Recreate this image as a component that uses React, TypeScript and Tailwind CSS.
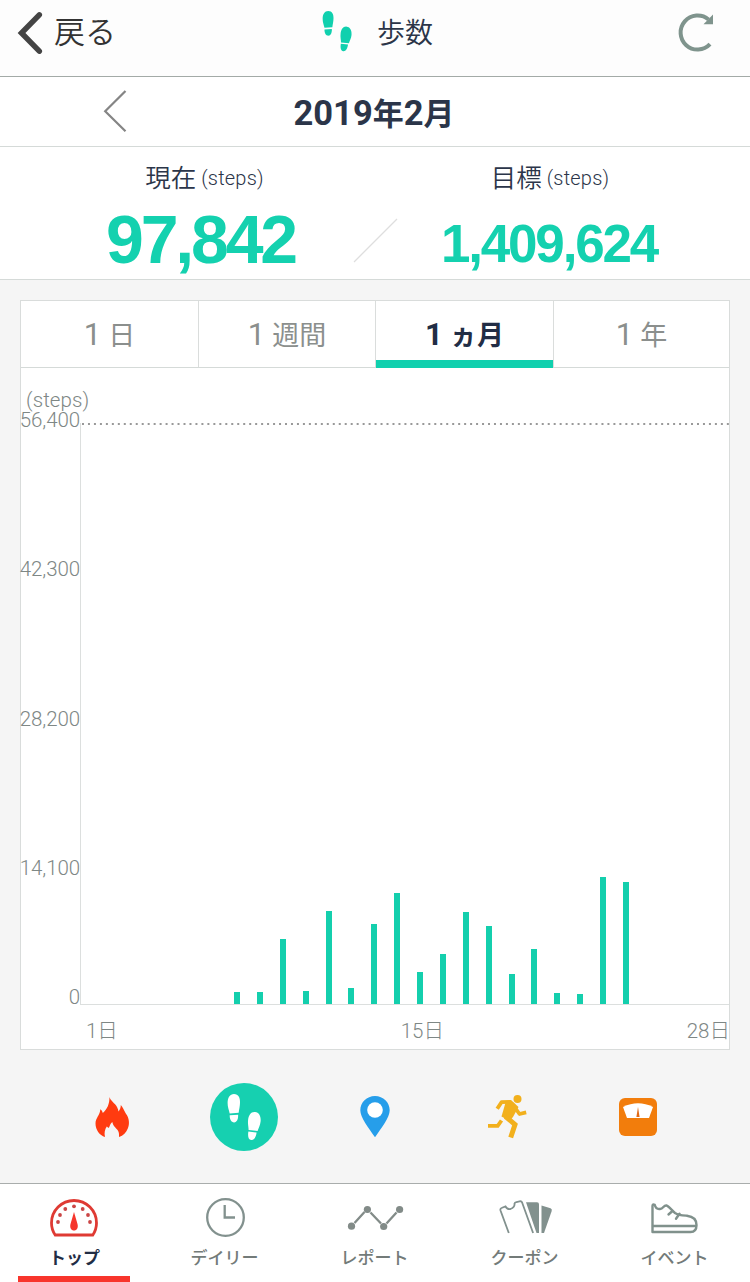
import type { ReactNode } from "react";
import clsx from "clsx";

const TABS = [
  { unit: "日", active: false },
  { unit: "週間", active: false },
  { unit: "ヵ月", active: true },
  { unit: "年", active: false },
];

// Bar heights in px for day 8 through day 25
const BARS = [12, 12, 65, 13, 93, 16, 80, 111, 32, 50, 92, 78, 30, 55, 11, 10, 127, 122];

function Footprints({ className }: { className?: string }) {
  return (
    <svg viewBox="227 1093 34 48" className={className} fill="currentColor">
      <path d="M234 1094c4.500 0 6.200 4 6 8.500 0 4-1 7-1.300 10.300l-9 .6c-.7-3.400-2.200-6.400-2.100-10.700.1-5 2.200-8.700 6.400-8.700Z" />
      <path d="m229.700 1115.300 8.400-.6c.3 4.200-1.300 7.700-4 7.700-2.900 0-4.500-3-4.400-7.100Z" />
      <path d="M255.100 1112c4.200.5 6 4.500 5.500 9.500-.4 4-2.200 6.700-3 9.500l-9-1c0-3.400-1-6.300-.5-10 .6-5 2.900-8.500 7-8Z" />
      <path d="m248.400 1131.600 8.200.9c-.5 4.300-2.400 7.900-5.400 7.600-2.900-.3-3.600-4.200-2.800-8.500Z" />
    </svg>
  );
}

function Header() {
  return (
    <header className="flex h-[77px] items-start border-b border-[#a3aaa7] bg-[#fdfdfd]">
      <button className="flex w-[250px] items-center pl-4 text-left">
        <svg viewBox="16 8 28 48" className="mt-2 h-12 w-7" fill="none" stroke="#444" strokeWidth="5.500" strokeLinecap="round">
          <path d="M39.300 13.800 21.500 32l17.800 18.200" />
        </svg>
        <span className="mt-[9px] ml-[10px] text-[31px] leading-[48px] font-[350] text-[#333]">戻る</span>
      </button>
      <div className="flex w-[250px] pl-[72px] text-[#10d0ae]">
        <Footprints className="mt-[10px] h-[42px] w-[30px]" />
        <span className="mt-[10px] ml-[25px] text-[28px] leading-[48px] font-[350] text-[#2b3548]">歩数</span>
      </div>
      <button className="ml-[176px]" aria-label="更新">
        <svg viewBox="676 10 42 44" className="mt-[10px] h-11 w-[42px]" fill="none">
          <path d="M710 44.200A17 17 0 1 1 708.500 19.500" stroke="#7f948d" strokeWidth="4" />
          <path d="M713 14.500V24.200H703.500Z" fill="#7f948d" />
        </svg>
      </button>
    </header>
  );
}

function MonthBar() {
  return (
    <div className="relative flex h-[70px] items-center justify-center border-b border-[#d5dad8] bg-white">
      <button className="absolute top-[12px] left-[102px]" aria-label="前の月">
        <svg viewBox="102 89 26 44" className="h-11 w-[26px]" fill="none" stroke="#858585" strokeWidth="2.200">
          <path d="m125.500 91-20.300 20.300 20.300 20" />
        </svg>
      </button>
      <h1 className="mt-[5px] flex items-baseline pr-[2px] text-[31px] leading-[44px] font-bold text-[#2b3549]">
        <span className="text-[34.500px]">2019</span>年<span className="text-[34.500px]">2</span>月
      </h1>
    </div>
  );
}

function StatLabel({ children }: { children: ReactNode }) {
  return (
    <div className="flex h-9 items-baseline justify-center text-[25.500px] leading-9 text-[#2b3549]">
      <span className="font-[350]">{children}</span>
      <span className="relative -top-[2px] ml-[5px] text-[20px] font-light tracking-[0.200px]">(steps)</span>
    </div>
  );
}

function Stats() {
  return (
    <section className="flex h-[133px] border-b border-[#d5dad8] bg-white pt-[13px]">
      <div className="w-[352px] pl-[57px]">
        <StatLabel>現在</StatLabel>
        <p className="mt-[11px] pr-[8px] text-center font-['Liberation_Sans'] text-[68px] leading-[64px] font-bold tracking-[-3.200px] text-[#14d1af]">
          97,842
        </p>
      </div>
      <svg viewBox="352 217 47 47" className="mt-[57px] h-[47px] w-[47px]">
        <path d="m354 262 43-43" stroke="#dedede" strokeWidth="1.300" />
      </svg>
      <div className="w-[302px]">
        <StatLabel>目標</StatLabel>
        <p className="mt-[16px] pr-[2px] text-center font-['Liberation_Sans'] text-[53px] leading-[64px] font-bold tracking-[-2.200px] text-[#14d1af]">
          1,409,624
        </p>
      </div>
    </section>
  );
}

function Tabs() {
  return (
    <div className="grid h-[67px] grid-cols-[177px_177px_178px_1fr] border-b border-[#d5dad8]">
      {TABS.map((tab, i) => (
        <button
          key={tab.unit}
          className={clsx(
            "relative flex items-baseline justify-center pt-[11px] text-[27px] leading-[46px]",
            i > 0 && "border-l border-[#dadddc]",
            tab.active ? "font-bold text-[#222d45]" : "text-[#8b8f8d]",
          )}
        >
          <span className="mr-[7px] text-[31px]">1</span>
          {tab.unit}
          {tab.active && <span className="absolute -bottom-px left-0 h-2 w-full bg-[#10d0ae]" />}
        </button>
      ))}
    </div>
  );
}

function Chart() {
  return (
    <div className="h-[681px] text-[20.500px] leading-[20px] font-light text-[#7e8785]">
      <div className="pt-[22px] pl-[5px] tracking-[0.100px]">(steps)</div>
      <div className="flex">
        <div className="-ml-px flex h-[600px] w-[60px] flex-col items-end tracking-[-0.100px]">
          <span className="mb-[129px]">56,400</span>
          <span className="mb-[130px]">42,300</span>
          <span className="mb-[129px]">28,200</span>
          <span className="mb-[109px]">14,100</span>
          <span>0</span>
        </div>
        <div className="mt-[13px] h-[582px] w-[650px] border-b border-l border-[#dcdfde]">
          <svg className="block h-[2px] w-full" viewBox="0 0 649 2">
            <path d="M1 1H649" stroke="#999" strokeWidth="1.800" strokeDasharray="2 3.980" />
          </svg>
          <div className="flex h-[579px] items-end pl-[153px]">
            {BARS.map((height, i) => (
              <div key={i} className="w-[22.880px] shrink-0">
                <div className="w-[6px] bg-[#14cfad]" style={{ height }} />
              </div>
            ))}
          </div>
        </div>
      </div>
      <div className="mt-[11px] flex justify-between pl-[65px]">
        <span>1日</span>
        <span className="pl-[40px]">15日</span>
        <span className="-mr-px">28日</span>
      </div>
    </div>
  );
}

function MetricPicker() {
  return (
    <div className="mt-[33px] grid h-[68px] grid-cols-[repeat(5,131.500px)] place-items-center pl-[46.500px]">
      <svg viewBox="94 1095 36 44" className="h-11 w-9">
        <path
          d="M109.500 1097c1 4 5.500 6 7.500 10 .8 1.600 1.300 3 1.500 4.500 1.600-1.800 2.300-4 2.300-6.500 2 2 3 5 5 8.500 3.500 4.500 4 10.500 2 15-1.500 4-4.500 7.200-8.800 8.500.5-6-1.500-7-3.700-9.500-1.700-1.800-2.500-3.300-3-5.500-2 1.300-2.500 4-3.500 6-1-.8-1.500-1-2-1.500-2 3-2.800 6.500-1.800 10.500-5.500-1.500-9.500-7.500-9.500-13.500 0-5.500 4.500-8 4.800-14.200 1.500 1 2.200 2.200 2.500 3.700 4.500-4 6.700-9 6.700-16Z"
          fill="#ff3b10"
        />
      </svg>
      <div className="flex h-[68px] w-[68px] justify-center rounded-full bg-[#16d0b0] text-white">
        <Footprints className="mt-[10px] h-12 w-[34px]" />
      </div>
      <svg viewBox="359 1095 32 44" className="h-11 w-8">
        <path d="M375 1096c8.300 0 14.700 6.500 14.700 14.200 0 7.300-8.200 17.500-14.700 27-6.500-9.500-14.700-19.700-14.700-27 0-7.700 6.400-14.200 14.700-14.200Z" fill="#269eea" />
        <circle cx="375" cy="1110" r="7.800" fill="#fff" />
      </svg>
      <svg viewBox="486 1094 42 46" className="h-[46px] w-[42px]" fill="none" stroke="#f2b01c" strokeWidth="3.800">
        <circle cx="517.500" cy="1099" r="4" fill="#f2b01c" stroke="none" />
        <path d="m497.200 1108.700 4.300-6.500 9.500-.4M512 1103.500l7.500 10.500 6.700-1.700" strokeLinejoin="round" />
        <path d="m506 1101 5-1 7.500 7-5.500 10-3.500 4-8-4.500Z" fill="#f2b01c" stroke="none" />
        <path d="m505.500 1116.500 9.500 8-4.300 13" strokeWidth="5" />
        <path d="m501.500 1120.500-3.800 5.300h-9.700" />
      </svg>
      <svg viewBox="618 1097 40 40" className="h-10 w-10">
        <rect x="619" y="1098" width="38" height="38" rx="6" fill="#f27d0c" />
        <path d="M623 1107q15-7.500 30 0l-4 11h-22Z" fill="#fff" />
        <path d="m638 1107 1.600 10h-3.200Z" fill="#e26b18" />
      </svg>
    </div>
  );
}

function GaugeIcon() {
  return (
    <svg viewBox="50 1197 50 41" className="h-[41px] w-[50px]" fill="#f5352c">
      <path d="M55.200 1235q-3.700-5.500-3.700-12a22.500 22.500 0 0 1 45 0q0 6.500-3.700 12Z" fill="none" stroke="#df3a33" strokeWidth="2.800" />
      <path d="m74 1212 3.500 12c1 4-.8 6.500-3.500 6.500s-4.500-2.500-3.500-6.500Z" />
      <g fill="#cb4545">
        <circle cx="58" cy="1222" r="1.900" />
        <circle cx="60" cy="1215" r="1.900" />
        <circle cx="65.300" cy="1209" r="1.900" />
        <circle cx="74" cy="1206.300" r="1.900" />
        <circle cx="82.700" cy="1209" r="1.900" />
        <circle cx="88" cy="1215" r="1.900" />
        <circle cx="90" cy="1222" r="1.900" />
      </g>
    </svg>
  );
}

function ClockIcon() {
  return (
    <svg viewBox="205 1197 41 41" className="h-[41px] w-[41px]" fill="none" stroke="#82918e" strokeWidth="2.300">
      <circle cx="225.500" cy="1217.500" r="18.300" />
      <path d="M224.700 1205v12.500h10.300" />
    </svg>
  );
}

function ReportIcon() {
  return (
    <svg viewBox="346 1197 59 41" className="h-[41px] w-[59px]" fill="#828b88">
      <path d="m354.500 1223 10-11M370.500 1212.500l10.500 11M386.500 1223.500l10-11" stroke="#828b88" strokeWidth="2.300" />
      <circle cx="351.500" cy="1226.200" r="3.600" />
      <circle cx="367.400" cy="1209.500" r="3.600" />
      <circle cx="383.700" cy="1226.500" r="3.600" />
      <circle cx="399.600" cy="1209.500" r="3.600" />
    </svg>
  );
}

function CouponIcon() {
  return (
    <svg viewBox="497 1197 56 41" className="h-[41px] w-14" fill="#82918e">
      <path d="m508.800 1233-8.300-22.500q-.5-2 1-2.500l4-1.500q1.500 3 5 2.500 4.500-1.500 4-5.500.3-1 2-1.500l4-.8q1 0 1.600 1.300l11 30.500" fill="none" stroke="#82918e" strokeWidth="1.800" />
      <path d="M526 1202.300h11q2 0 2 2V1233h-2.500Z" />
      <path d="m541.500 1205.500 9 2.700q1.800.8 1.200 2.800L544 1233h-2.500Z" />
    </svg>
  );
}

function ShoeIcon() {
  return (
    <svg viewBox="651 1197 49 41" className="h-[41px] w-[49px]" fill="none" stroke="#80918c" strokeWidth="2.400" strokeLinejoin="round" strokeLinecap="round">
      <path d="M652.500 1206q0-2.500 2.200-1.200c.8 3 2.300 4.700 5.300 4.200 3.500-.3 3.500-4 6.500-3.500 2 .5 5 4.500 8.500 7.500 3.500 2.500 8 2.500 12 2.700 6.500.8 9.500 4 9.500 9.300 0 4.500-2 7-6 7h-38Z" />
      <path d="M653 1226h43M672.500 1211l-4 3.500M679.500 1213.700l-3.500 5" />
    </svg>
  );
}

const NAV = [
  { label: "トップ", icon: <GaugeIcon />, active: true },
  { label: "デイリー", icon: <ClockIcon />, active: false },
  { label: "レポート", icon: <ReportIcon />, active: false },
  { label: "クーポン", icon: <CouponIcon />, active: false },
  { label: "イベント", icon: <ShoeIcon />, active: false },
];

function BottomNav() {
  return (
    <nav className="mt-[32px] grid h-[99px] grid-cols-5 border-t border-[#a9adac] bg-white">
      {NAV.map((item) => (
        <a key={item.label} className="relative flex flex-col items-center pt-[13px]">
          {item.icon}
          <span
            className={clsx(
              "mt-[7px] pr-px text-[17px] leading-[26px]",
              item.active ? "font-bold text-[#222d45]" : "font-medium text-[#737b79]",
            )}
          >
            {item.label}
          </span>
          {item.active && <span className="absolute bottom-0 left-[18px] h-[6px] w-[112px] bg-[#f8352c]" />}
        </a>
      ))}
    </nav>
  );
}

export default function App() {
  return (
    <div className="h-[1282px] w-[750px] overflow-hidden bg-[#f5f5f5] font-[Roboto,'Noto_Sans_CJK_JP',sans-serif]">
      <Header />
      <MonthBar />
      <Stats />
      <main className="mx-5 mt-[20px] h-[750px] border border-[#d9dcdb] bg-white">
        <Tabs />
        <Chart />
      </main>
      <MetricPicker />
      <BottomNav />
    </div>
  );
}
